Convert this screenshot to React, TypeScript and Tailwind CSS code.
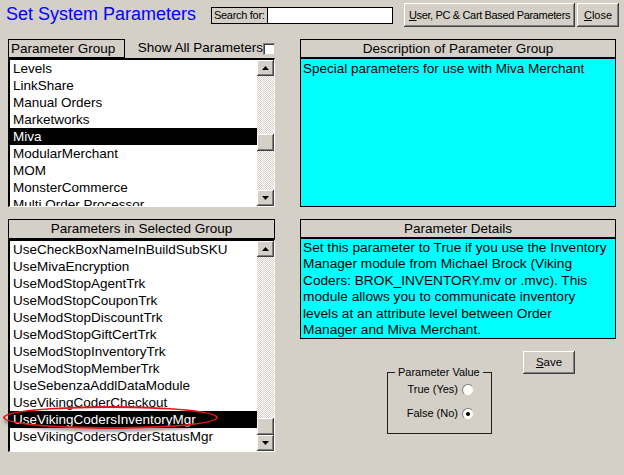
import React from 'react'

const groups = [
  'Levels',
  'LinkShare',
  'Manual Orders',
  'Marketworks',
  'Miva',
  'ModularMerchant',
  'MOM',
  'MonsterCommerce',
  'Multi Order Processor',
]

const params = [
  'UseCheckBoxNameInBuildSubSKU',
  'UseMivaEncryption',
  'UseModStopAgentTrk',
  'UseModStopCouponTrk',
  'UseModStopDiscountTrk',
  'UseModStopGiftCertTrk',
  'UseModStopInventoryTrk',
  'UseModStopMemberTrk',
  'UseSebenzaAddlDataModule',
  'UseVikingCoderCheckout',
  'UseVikingCodersInventoryMgr',
  'UseVikingCodersOrderStatusMgr',
]

const raised =
  'bg-[#d4d0c8] shadow-[inset_-1px_-1px_#404040,inset_1px_1px_#ffffff,inset_-2px_-2px_#808080]'

function ArrowBtn({ up }: { up?: boolean }) {
  return (
    <div className={`w-[17px] h-[16px] flex items-center justify-center shrink-0 ${raised}`}>
      <svg width="7" height="4" viewBox="0 0 7 4">
        {up ? <path d="M0 4 L3.5 0 L7 4 Z" fill="#000" /> : <path d="M0 0 L3.5 4 L7 0 Z" fill="#000" />}
      </svg>
    </div>
  )
}

function ScrollBar({ thumbTop }: { thumbTop: number | null }) {
  return (
    <div className="w-[17px] flex flex-col shrink-0">
      <ArrowBtn up />
      <div className="flex-1 flex flex-col bg-[repeating-conic-gradient(#d4d0c8_0%_25%,#ffffff_0%_50%)] bg-[length:2px_2px]">
        {thumbTop === null ? <div className="flex-1" /> : <div style={{ height: thumbTop }} />}
        <div className={`h-[17px] w-[17px] ${raised}`} />
      </div>
      <ArrowBtn />
    </div>
  )
}

function ListBox({ items, selected, height, thumbTop, children }: {
  items: string[]
  selected: string
  height: string
  thumbTop: number | null
  children?: React.ReactNode
}) {
  return (
    <div className={`relative flex ${height} border-t-2 border-l-2 border-black border-r border-b border-r-white border-b-white bg-white`}>
      <div className="flex-1 overflow-hidden">
        {items.map((it) => (
          <div
            key={it}
            className={`h-[17px] leading-[17px] pl-[3px] text-[13.5px] whitespace-nowrap ${
              it === selected ? 'bg-black text-white' : 'text-black'
            }`}
          >
            {it}
          </div>
        ))}
      </div>
      <ScrollBar thumbTop={thumbTop} />
      {children}
    </div>
  )
}

function Radio({ checked }: { checked?: boolean }) {
  return (
    <div className="w-[12px] h-[12px] rounded-full bg-white border border-t-[#808080] border-l-[#808080] border-r-[#d4d0c8] border-b-[#d4d0c8] flex items-center justify-center">
      {checked && <div className="w-[4px] h-[4px] rounded-full bg-black" />}
    </div>
  )
}

export default function App() {
  return (
    <div className="w-[624px] h-[475px] bg-[#d4d0c8] overflow-hidden text-black font-['Liberation_Sans',Arial,sans-serif]">
      {/* top bar */}
      <div className="flex items-start h-[39px]">
        <div className="w-[205px] ml-[6px] mt-[3px] text-[18px] leading-[22px] text-[#0000ff] whitespace-nowrap">
          Set System Parameters
        </div>
        <div className="flex mt-[7px] h-[17px]">
          <div className="border border-black w-[57px] text-[11px] tracking-[-0.3px] leading-[15px] pl-[2px] whitespace-nowrap">Search for:</div>
          <div className="border border-black border-l-0 bg-white w-[125px]" />
        </div>
        <div className="flex ml-[11px] mt-[3px] gap-[2px]">
          <div className={`${raised} w-[171px] h-[24px] flex items-center justify-center text-[11px] tracking-[-0.35px] whitespace-nowrap`}>
            <span><u>U</u>ser, PC &amp; Cart Based Parameters</span>
          </div>
          <div className={`${raised} w-[42px] h-[24px] flex items-center justify-center text-[11px]`}>
            <span><u>C</u>lose</span>
          </div>
        </div>
      </div>

      <div className="flex pl-[8px] gap-[25px]">
        {/* left column */}
        <div className="w-[267px] flex flex-col">
          <div className="flex items-center h-[19px]">
            <div className="w-[117px] h-[19px] border border-black text-[13.5px] leading-[17px] pl-[2px] whitespace-nowrap">
              Parameter Group
            </div>
            <div className="ml-[13px] text-[13.5px] whitespace-nowrap">Show All Parameters</div>
            <div className="w-[12px] h-[12px] bg-white border border-t-[#808080] border-l-[#808080] border-r-[#d4d0c8] border-b-[#d4d0c8] shadow-[inset_1px_1px_#404040]" />
          </div>
          <ListBox items={groups} selected="Miva" height="h-[149px]" thumbTop={58} />

          <div className="mt-[12px] h-[20px] border border-black text-center text-[13.5px] leading-[18px]">
            Parameters in Selected Group
          </div>
          <ListBox items={params} selected="UseVikingCodersInventoryMgr" height="h-[213px]" thumbTop={null}>
            <div className="absolute left-[-7px] top-[165px] w-[215px] h-[23px] rounded-[50%] border-2 border-[#e01818] shadow-[1px_3px_3px_rgba(0,0,0,0.35)] pointer-events-none" />
          </ListBox>
        </div>

        {/* right column */}
        <div className="w-[316px] flex flex-col">
          <div className="h-[20px] border border-black border-b-2 text-center text-[13.5px] leading-[17px]">
            Description of Parameter Group
          </div>
          <div className="h-[148px] border border-black border-t-0 bg-[#00ffff] text-[13.5px] leading-[17px] pl-[2px] pt-[1px]">
            Special parameters for use with Miva Merchant
          </div>

          <div className="mt-[12px] h-[20px] border border-black border-b-2 text-center text-[13.5px] leading-[17px]">
            Parameter Details
          </div>
          <div className="h-[100px] border border-black border-t-0 bg-[#00ffff] text-[13.7px] leading-[16.4px] pl-[2px] pt-[1px] whitespace-nowrap">
            <div>Set this parameter to True if you use the Inventory</div>
            <div>Manager module from Michael Brock (Viking</div>
            <div>Coders: BROK_INVENTORY.mv or .mvc). This</div>
            <div>module allows you to communicate inventory</div>
            <div>levels at an attribute level between Order</div>
            <div>Manager and Miva Merchant.</div>
          </div>

          <div className="flex items-start">
            <fieldset className="ml-[87px] mt-[27px] w-[105px] h-[68px] border border-[#202020] px-0">
              <legend className="ml-[7px] px-[3px] text-[11px] leading-[12px]">Parameter Value</legend>
              <div className="flex flex-col items-end pr-[17px] gap-[11px] mt-[5px] text-[11px] leading-[13px]">
                <div className="flex items-center gap-[4px]">
                  <span>True (Yes)</span>
                  <Radio />
                </div>
                <div className="flex items-center gap-[4px]">
                  <span>False (No)</span>
                  <Radio checked />
                </div>
              </div>
            </fieldset>
            <div className={`${raised} ml-[31px] mt-[12px] w-[52px] h-[23px] flex items-center justify-center text-[11.5px]`}>
              <span><u>S</u>ave</span>
            </div>
          </div>
        </div>
      </div>
    </div>
  )
}
